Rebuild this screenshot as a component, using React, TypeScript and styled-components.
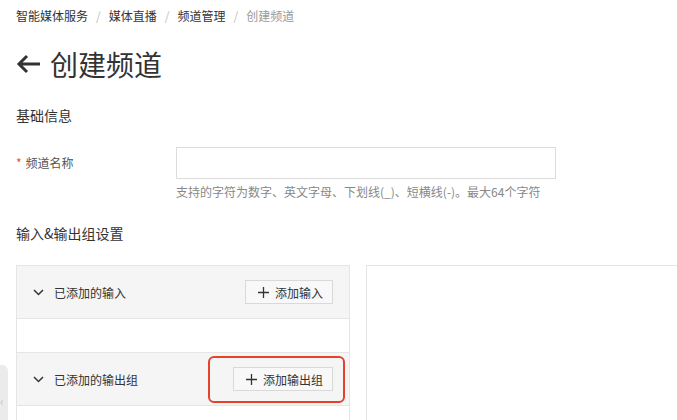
import styled, { createGlobalStyle } from "styled-components";

const GlobalStyle = createGlobalStyle`
  html, body {
    margin: 0;
    padding: 0;
    background: #fff;
    overflow: hidden;
  }
  body {
    font-family: "Noto Sans CJK SC", "Noto Sans", "Liberation Sans", sans-serif;
    color: #333;
  }
`;

const Page = styled.div`
  position: relative;
  height: 420px;
  padding: 6px 0 0 16px;
  box-sizing: border-box;
  overflow: hidden;
`;

const Breadcrumb = styled.div`
  display: flex;
  align-items: center;
  font-size: 12px;
  line-height: 20px;
`;

const Crumb = styled.span<{ current?: boolean }>`
  color: ${({ current }) => (current ? "#999" : "#333")};
`;

const Sep = styled.span`
  color: #c1c1c1;
  margin: 0 8px;
`;

const TitleRow = styled.div`
  display: flex;
  align-items: center;
  gap: 8px;
  height: 40px;
  margin-top: 18px;
`;

const Title = styled.h1`
  margin: 0;
  font-size: 28px;
  font-weight: 400;
  line-height: 40px;
  color: #333;
`;

const SectionTitle = styled.h2<{ top: number }>`
  margin: ${({ top }) => top}px 0 0;
  font-size: 14px;
  font-weight: 400;
  line-height: 20px;
  color: #333;
`;

const FormRow = styled.div`
  display: flex;
  margin-top: 22px;
`;

const Label = styled.label`
  width: 160px;
  flex-shrink: 0;
  font-size: 12px;
  line-height: 32px;
  color: #555;
`;

const Required = styled.span`
  color: #e0533f;
  margin-right: 4px;
`;

const Field = styled.div`
  display: flex;
  flex-direction: column;
`;

const Input = styled.input`
  width: 380px;
  height: 32px;
  box-sizing: border-box;
  border: 1px solid #dcdcdc;
  outline: none;
  padding: 0 8px;
  font-size: 12px;
`;

const Help = styled.div`
  margin-top: 4px;
  font-size: 12px;
  line-height: 18px;
  color: #888;
`;

const Panels = styled.div`
  display: grid;
  grid-template-columns: 334px 1fr;
  gap: 16px;
  margin-top: 22px;
`;

const GroupPanel = styled.div`
  border: 1px solid #e5e5e5;
  height: 200px;
`;

/* the preview column runs on past the right edge of the window */
const PreviewPanel = styled.div`
  border: 1px solid #e5e5e5;
  border-right: none;
  height: 200px;
  background: #fff;
`;

const GroupHeader = styled.div`
  display: flex;
  align-items: center;
  justify-content: space-between;
  height: 52px;
  padding: 0 16px;
  background: #f5f5f5;
  border-bottom: 1px solid #e5e5e5;
`;

const GroupTitle = styled.div`
  display: flex;
  align-items: center;
  gap: 10px;
  font-size: 12px;
  color: #333;
`;

const GroupBody = styled.div`
  height: 33px;
  border-bottom: 1px solid #e5e5e5;
`;

const Highlight = styled.div`
  position: relative;
  &::after {
    content: "";
    position: absolute;
    left: -25px;
    right: -12px;
    top: -11px;
    bottom: -12px;
    border: 2px solid #e5412b;
    border-radius: 6px;
    pointer-events: none;
  }
`;

const Button = styled.button`
  display: flex;
  align-items: center;
  gap: 6px;
  height: 24px;
  padding: 0 9px 0 12px;
  border: 1px solid #d9d9d9;
  background: #f8f8f8;
  font-family: inherit;
  font-size: 12px;
  color: #333;
  cursor: pointer;
`;

const SideTab = styled.div`
  position: absolute;
  left: 0;
  top: 365px;
  width: 8px;
  height: 70px;
  background: #ebebeb;
  border-radius: 0 6px 6px 0;
  display: flex;
  align-items: center;
  font-size: 12px;
  color: #c4c4c4;
  overflow: hidden;
`;

const BackArrow = () => (
  <svg width="26" height="22" viewBox="0 0 26 22" fill="none">
    <path d="M24 11H3M11 3L3 11L11 19" stroke="#333" strokeWidth="3" />
  </svg>
);

const Chevron = () => (
  <svg width="11" height="7" viewBox="0 0 11 7" fill="none">
    <path d="M1 1L5.5 5.5L10 1" stroke="#333" strokeWidth="1.5" />
  </svg>
);

const Plus = () => (
  <svg width="11" height="11" viewBox="0 0 11 11" fill="none">
    <path d="M5.5 0V11M0 5.5H11" stroke="#333" strokeWidth="1.3" />
  </svg>
);

const App = () => {
  const crumbs = ["智能媒体服务", "媒体直播", "频道管理"];
  return (
    <>
      <GlobalStyle />
      <Page>
        <Breadcrumb>
          {crumbs.map((c) => (
            <span key={c}>
              <Crumb>{c}</Crumb>
              <Sep>/</Sep>
            </span>
          ))}
          <Crumb current>创建频道</Crumb>
        </Breadcrumb>

        <TitleRow>
          <BackArrow />
          <Title>创建频道</Title>
        </TitleRow>

        <SectionTitle top={21}>基础信息</SectionTitle>

        <FormRow>
          <Label>
            <Required>*</Required>频道名称
          </Label>
          <Field>
            <Input />
            <Help>支持的字符为数字、英文字母、下划线(_)、短横线(-)。最大64个字符</Help>
          </Field>
        </FormRow>

        <SectionTitle top={22}>输入&amp;输出组设置</SectionTitle>

        <Panels>
          <GroupPanel>
            <GroupHeader>
              <GroupTitle>
                <Chevron />
                已添加的输入
              </GroupTitle>
              <Button>
                <Plus />
                添加输入
              </Button>
            </GroupHeader>
            <GroupBody />
            <GroupHeader>
              <GroupTitle>
                <Chevron />
                已添加的输出组
              </GroupTitle>
              <Highlight>
                <Button>
                  <Plus />
                  添加输出组
                </Button>
              </Highlight>
            </GroupHeader>
          </GroupPanel>
          <PreviewPanel />
        </Panels>

        <SideTab>‹</SideTab>
      </Page>
    </>
  );
};

export default App;
